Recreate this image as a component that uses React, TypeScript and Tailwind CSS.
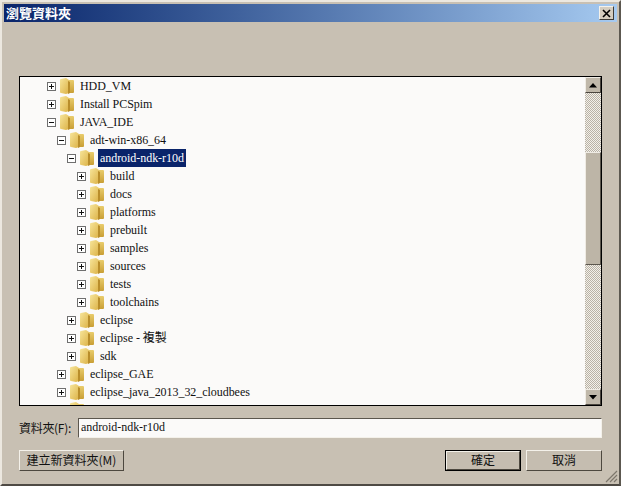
import React from "react";

const FONT = "font-['Liberation_Serif','Noto_Sans_CJK_TC',serif]";
const CJK = "font-['Noto_Sans_CJK_TC','Liberation_Sans',sans-serif]";

type Row = { name: string; level: number; open?: boolean; selected?: boolean };

const rows: Row[] = [
  { name: "HDD_VM", level: 0 },
  { name: "Install PCSpim", level: 0 },
  { name: "JAVA_IDE", level: 0, open: true },
  { name: "adt-win-x86_64", level: 1, open: true },
  { name: "android-ndk-r10d", level: 2, open: true, selected: true },
  { name: "build", level: 3 },
  { name: "docs", level: 3 },
  { name: "platforms", level: 3 },
  { name: "prebuilt", level: 3 },
  { name: "samples", level: 3 },
  { name: "sources", level: 3 },
  { name: "tests", level: 3 },
  { name: "toolchains", level: 3 },
  { name: "eclipse", level: 2 },
  { name: "eclipse - 複製", level: 2 },
  { name: "sdk", level: 2 },
  { name: "eclipse_GAE", level: 1 },
  { name: "eclipse_java_2013_32_cloudbees", level: 1 },
  { name: "", level: 1 },
];

const indents = ["ml-[27px]", "ml-[37px]", "ml-[47px]", "ml-[57px]"];

function Folder() {
  return (
    <svg width="16" height="18" viewBox="0 0 16 18" className="shrink-0">
      <defs>
        <linearGradient id="folderFront" x1="0" y1="0" x2="1" y2="1">
          <stop offset="0" stopColor="#f7e59a" />
          <stop offset="1" stopColor="#dcb246" />
        </linearGradient>
        <linearGradient id="folderBack" x1="0" y1="0" x2="0" y2="1">
          <stop offset="0" stopColor="#e9cc6c" />
          <stop offset="1" stopColor="#c99f35" />
        </linearGradient>
      </defs>
      <path d="M8 3h6a1 1 0 0 1 1 1v11a1 1 0 0 1-1 1H8z" fill="url(#folderBack)" />
      <path d="M1 3a1 1 0 0 1 1-1l5-1 3 2v13l-3 1-5-1a1 1 0 0 1-1-1z" fill="url(#folderFront)" />
      <path d="M9 4l2 1v11l-2 1z" fill="#b98e2b" />
    </svg>
  );
}

function Expander({ open }: { open?: boolean }) {
  return (
    <div className="relative w-[9px] h-[9px] shrink-0 border border-[#6f6f6f] bg-white">
      <div className="absolute left-[1px] top-[3px] w-[5px] h-[1px] bg-[#111]" />
      {!open && <div className="absolute left-[3px] top-[1px] w-[1px] h-[5px] bg-[#111]" />}
    </div>
  );
}

function TreeRow({ row }: { row: Row }) {
  return (
    <div className={`flex items-center h-[18px] shrink-0 ${indents[row.level]}`}>
      {row.name ? <Expander open={row.open} /> : <div className="w-[9px]" />}
      <div className="ml-[3px]">
        <Folder />
      </div>
      {row.name && (
        <span
          className={`ml-[3px] px-[2px] h-[18px] leading-[19px] text-[12px] tracking-[-0.05px] whitespace-nowrap ${
            row.selected ? "bg-[#0a246a] text-white" : "text-[#111]"
          }`}
        >
          {row.name}
        </span>
      )}
    </div>
  );
}

function ScrollButton({ up }: { up?: boolean }) {
  return (
    <div className="flex items-center justify-center w-[16px] h-[16px] shrink-0 bg-[#c0b8aa] border border-t-[#efebe4] border-l-[#efebe4] border-r-[#4a453e] border-b-[#4a453e]">
      <svg width="8" height="5" viewBox="0 0 8 5">
        <path d={up ? "M4 0 8 4.5H0z" : "M0 0h8L4 4.5z"} fill="#000" />
      </svg>
    </div>
  );
}

function Track({ className }: { className: string }) {
  return (
    <div
      className={`${className} bg-[repeating-conic-gradient(#f3f0ea_0_25%,#b9b2a6_0_50%)] bg-[length:2px_2px]`}
    />
  );
}

function Button({ label, width, main }: { label: string; width: string; main?: boolean }) {
  return (
    <div className={`${width} h-[21px] ${main ? "border border-black" : ""}`}>
      <div className="flex items-center justify-center h-full pb-[2px] bg-[#c5bdb0] border border-t-[#f4f1ea] border-l-[#f4f1ea] border-r-[#4d483f] border-b-[#4d483f] text-[12px] text-[#111] leading-none">
        {label}
      </div>
    </div>
  );
}

export default function App() {
  return (
    <div
      className={`relative w-[621px] h-[486px] flex flex-col bg-[#c8c0b3] border-2 border-t-[#ece8e0] border-l-[#ece8e0] border-r-[#5c5850] border-b-[#4e4a44] ${FONT}`}
    >
      <div className="mx-[2px] mt-[2px] h-[18px] shrink-0 flex items-center justify-between pl-[2px] pr-[3px] bg-gradient-to-r from-[#0a246a] to-[#a6caf0]">
        <span className={`text-[13px] font-bold text-white leading-none -mt-[2px] ${CJK}`}>瀏覽資料夾</span>
        <div className="flex items-center justify-center w-[15px] h-[14px] bg-[#d4cdc0] border border-t-[#f4f1ea] border-l-[#f4f1ea] border-r-[#3d3a35] border-b-[#3d3a35]">
          <svg width="9" height="9" viewBox="0 0 9 9">
            <path d="M1 1l7 7M8 1 1 8" stroke="#000" strokeWidth="1.6" fill="none" />
          </svg>
        </div>
      </div>

      <div className="flex-1 flex flex-col pl-[17px] pr-[17px]">
        <div className="mt-[54px] h-[330px] w-[583px] shrink-0 flex border border-black bg-[#fbfaf9]">
          <div className="flex-1 flex flex-col overflow-hidden">
            {rows.map((row, i) => (
              <TreeRow key={i} row={row} />
            ))}
          </div>
          <div className="w-[16px] flex flex-col shrink-0">
            <ScrollButton up />
            <Track className="h-[59px] shrink-0" />
            <div className="h-[113px] shrink-0 bg-[#bdb5a7] border border-t-[#efebe4] border-l-[#efebe4] border-r-[#5c574e] border-b-[#5c574e]" />
            <Track className="flex-1" />
            <ScrollButton />
          </div>
        </div>

        <div className="mt-[12px] flex items-center h-[20px] shrink-0">
          <span className={`w-[59px] text-[12px] tracking-[-0.3px] whitespace-nowrap text-[#111] ${CJK}`}>
            資料夾(F):
          </span>
          <div className="flex-1 h-[20px] flex items-center pl-[2px] pb-[2px] bg-[#fbfaf9] border border-t-[#5c574e] border-l-[#5c574e] border-r-[#f4f1ea] border-b-[#f4f1ea] text-[12px] tracking-[-0.05px] text-[#111]">
            android-ndk-r10d
          </div>
        </div>

        <div className={`mt-[12px] flex items-center ${CJK}`}>
          <Button label="建立新資料夾(M)" width="w-[105px]" />
          <div className="flex-1" />
          <Button label="確定" width="w-[76px]" main />
          <div className="w-[5px]" />
          <Button label="取消" width="w-[76px]" />
        </div>
      </div>

      <svg width="13" height="13" viewBox="0 0 13 13" className="absolute right-[1px] bottom-[1px]">
        <path d="M12 1 1 12M12 5 5 12M12 9 9 12" stroke="#7d776c" strokeWidth="1.2" fill="none" />
      </svg>
    </div>
  );
}
